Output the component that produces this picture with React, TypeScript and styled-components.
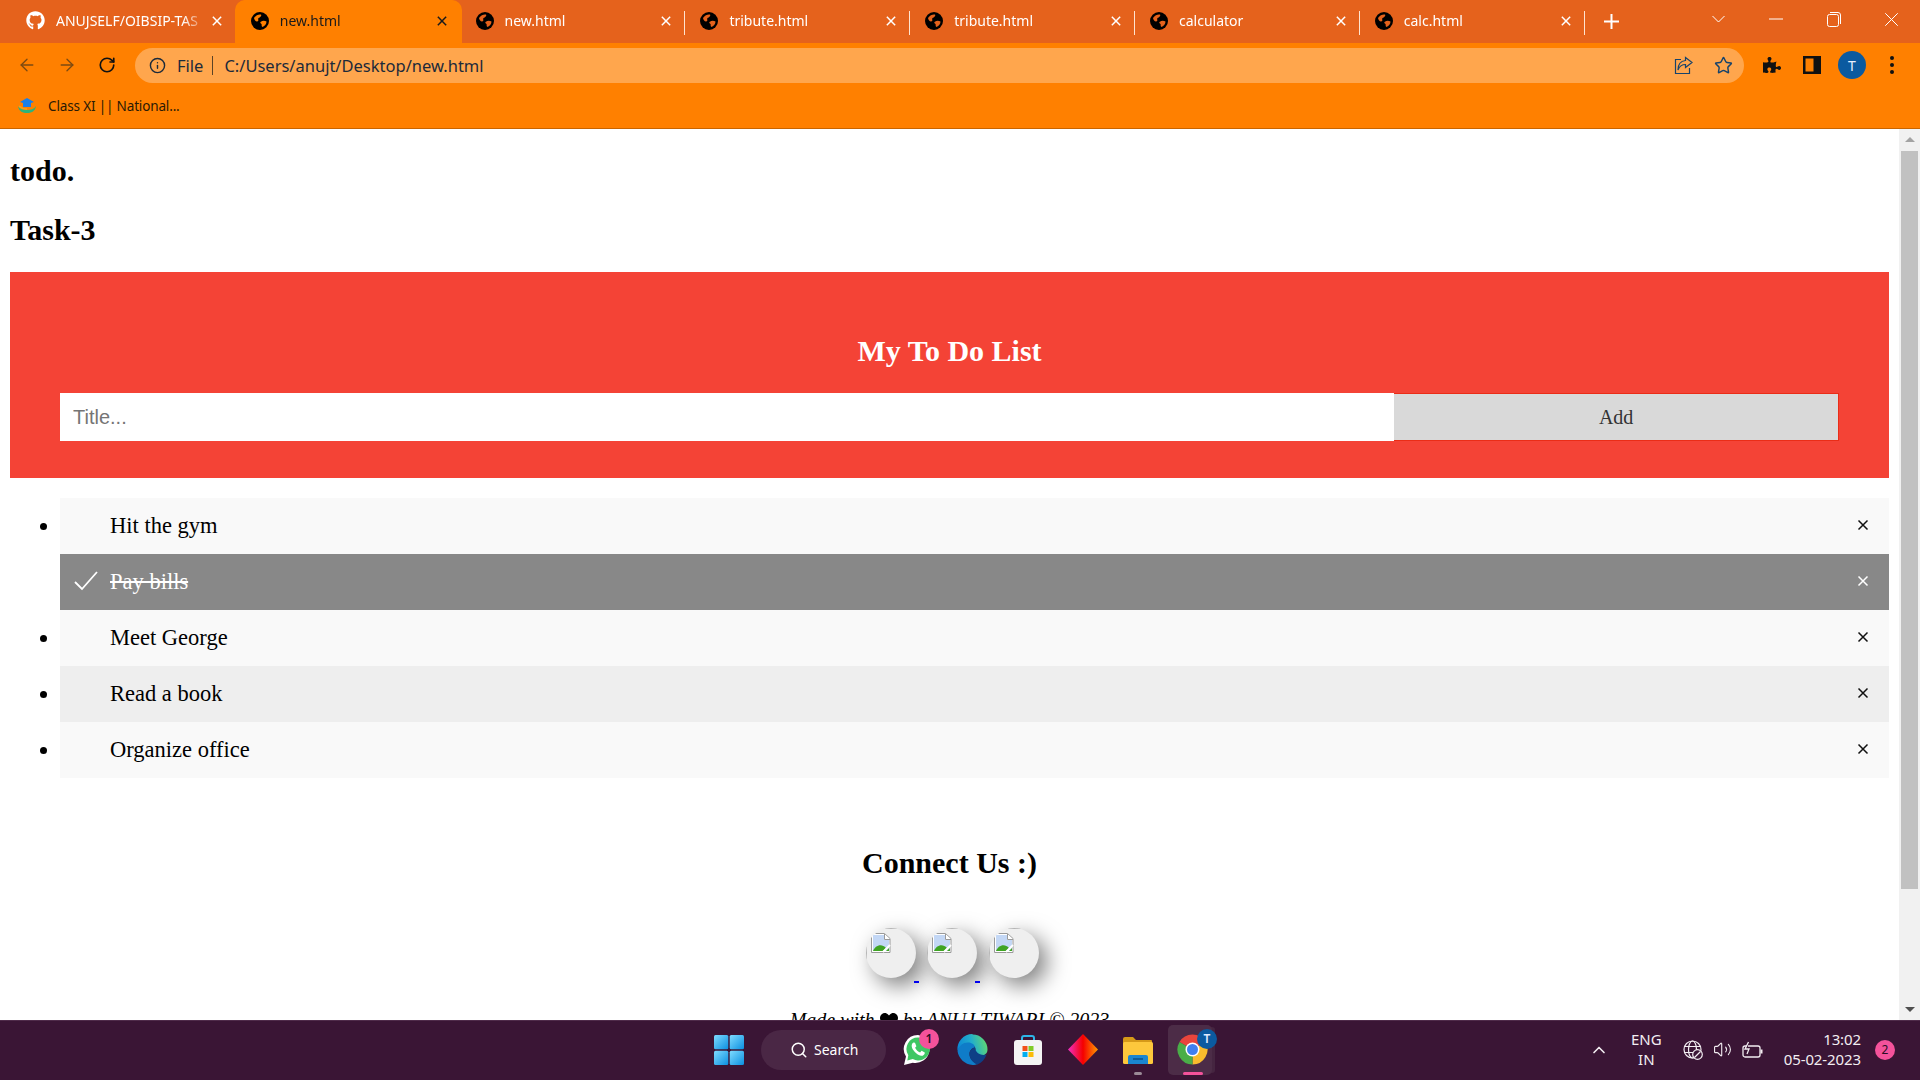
import styled, { createGlobalStyle } from 'styled-components';
import { ArrowLeft, ArrowRight, ChevronUp, Info, RotateCw, Search, Star, Volume2 } from 'lucide-react';
import { FaGithub, FaHeart, FaPuzzlePiece } from 'react-icons/fa';

const tabs = ['ANUJSELF/OIBSIP-TAS', 'new.html', 'new.html', 'tribute.html', 'tribute.html', 'calculator', 'calc.html'];
const todos = [
    { label: 'Hit the gym', checked: false, shade: '#f9f9f9' },
    { label: 'Pay bills', checked: true, shade: '#888888' },
    { label: 'Meet George', checked: false, shade: '#f9f9f9' },
    { label: 'Read a book', checked: false, shade: '#eeeeee' },
    { label: 'Organize office', checked: false, shade: '#f9f9f9' },
];

const GlobalStyle = createGlobalStyle`
    html, body {
        margin: 0;
        height: 100%;
        overflow: hidden;
        background: #fff;
    }
`;

const Screen = styled.div`
    display: flex;
    flex-direction: column;
    width: 1920px;
    height: 1080px;
    overflow: hidden;
    font-family: 'Open Sans', 'Noto Sans', sans-serif;
`;

const TabStrip = styled.div`
    display: flex;
    align-items: stretch;
    height: 43px;
    padding-left: 10px;
    background: #e5621c;
    color: #fff;
`;

const Tab = styled.div<{ $active?: boolean; $separator?: boolean }>`
    position: relative;
    display: flex;
    align-items: center;
    box-sizing: border-box;
    width: 224.8px;
    padding: 0 0 2px 16px;
    border-radius: 10px 10px 0 0;
    background: ${(p) => (p.$active ? '#ff8000' : 'transparent')};
    box-shadow: ${(p) => (p.$active ? '2px 0 0 #ff8000' : 'none')};
    color: ${(p) => (p.$active ? '#1a1a1a' : '#fff')};
    &::after {
        content: '';
        display: ${(p) => (p.$separator ? 'block' : 'none')};
        position: absolute;
        right: -1px;
        top: 11px;
        height: 24px;
        width: 1px;
        background: #ffe3cf;
    }
`;

const TabTitle = styled.span`
    flex: 1;
    margin-left: 11px;
    overflow: hidden;
    white-space: nowrap;
    font-family: 'Noto Sans', sans-serif;
    font-size: 14px;
    mask-image: linear-gradient(to right, #000 84%, transparent 100%);
`;

const TabClose = styled.span`
    display: flex;
    justify-content: center;
    width: 20px;
    margin-right: 8px;
`;

const NewTab = styled.div`
    display: flex;
    align-items: center;
    justify-content: center;
    width: 56px;
`;

const WindowControls = styled.div`
    display: flex;
    margin-left: auto;
`;

const WindowButton = styled.div`
    display: flex;
    align-items: center;
    justify-content: center;
    width: 57.5px;
    height: 38px;
`;

const Toolbar = styled.div`
    display: flex;
    align-items: center;
    height: 44px;
    padding: 0 8px 0 7px;
    background: #ff8000;
`;

const ToolButton = styled.div<{ $dim?: boolean }>`
    display: flex;
    align-items: center;
    justify-content: center;
    flex: none;
    width: 40px;
    color: ${(p) => (p.$dim ? '#7c4a12' : '#111')};
`;

const Omnibox = styled.div`
    display: flex;
    align-items: center;
    flex: 1;
    height: 35px;
    margin: 0 8px;
    padding: 0 1px 0 14px;
    border-radius: 18px;
    background: #ffa64d;
    color: #1c2a3a;
    font-family: 'Noto Sans', sans-serif;
    font-size: 16.5px;
`;

const ChipLabel = styled.span`
    margin-left: 11px;
    padding-right: 9px;
    border-right: 1px solid #5b4326;
    line-height: 19px;
`;

const Url = styled.span`
    flex: 1;
    margin-left: 11px;
    white-space: nowrap;
`;

const OmniIcon = styled.span`
    display: flex;
    justify-content: center;
    width: 40px;
    color: #17436b;
`;

const Avatar = styled.span`
    display: flex;
    align-items: center;
    justify-content: center;
    width: 28px;
    height: 28px;
    border-radius: 50%;
    background: #0b5aa0;
    color: #e8f0ff;
    font-family: 'Noto Sans', sans-serif;
    font-size: 14px;
`;

const Dots = styled.span`
    display: flex;
    flex-direction: column;
    gap: 3px;
    & i {
        width: 4px;
        height: 4px;
        border-radius: 50%;
        background: #111;
    }
`;

const BookmarkBar = styled.div`
    display: flex;
    align-items: center;
    gap: 11px;
    height: 42px;
    padding: 0 0 4px 17px;
    box-sizing: border-box;
    border-bottom: 1px solid #c96500;
    background: #ff8000;
    color: #2a1a05;
    font-family: 'Noto Sans', sans-serif;
    font-size: 13.5px;
    letter-spacing: -0.15px;
`;

const Viewport = styled.div`
    display: flex;
    flex: 1;
    min-height: 0;
    background: #fff;
`;

const Page = styled.main`
    flex: 1;
    min-width: 0;
    height: 100%;
    overflow: hidden;
    font-family: 'Liberation Serif', serif;
    color: #000;
    font-size: 20px;
`;

const PageBody = styled.div`
    margin: 0 10px;
`;

const Heading = styled.h2<{ $center?: boolean; $light?: boolean }>`
    margin: 25px 0;
    font-size: 30px;
    line-height: 34px;
    font-weight: bold;
    text-align: ${(p) => (p.$center ? 'center' : 'left')};
    color: ${(p) => (p.$light ? '#fff' : '#000')};
`;

const TodoHeader = styled.section`
    padding: 37px 50px;
    background: #f44336;
`;

const AddRow = styled.div`
    display: flex;
    height: 48px;
`;

const TitleInput = styled.input`
    box-sizing: border-box;
    width: 75%;
    padding: 13px;
    border: none;
    outline: none;
    background: #fff;
    font-family: 'Liberation Sans', sans-serif;
    font-size: 20px;
    &::placeholder {
        color: #757575;
    }
`;

const AddButton = styled.div`
    display: flex;
    align-items: center;
    justify-content: center;
    box-sizing: border-box;
    width: 25%;
    border: 1px solid #ea2d17;
    border-left: none;
    background: #d9d9d9;
    color: #333;
`;

const TodoList = styled.ul`
    margin: 20px 0 0;
    padding: 0 0 0 50px;
`;

const TodoItem = styled.li<{ $checked: boolean; $shade: string }>`
    position: relative;
    box-sizing: border-box;
    height: 56px;
    padding: 15px 10px 15px 50px;
    font-size: 22.5px;
    line-height: 26px;
    background: ${(p) => p.$shade};
    color: ${(p) => (p.$checked ? '#fff' : '#000')};
    list-style-type: ${(p) => (p.$checked ? 'none' : 'disc')};
    text-decoration: ${(p) => (p.$checked ? 'line-through' : 'none')};
`;

const CheckMark = styled.svg`
    position: absolute;
    left: 14px;
    top: 17px;
`;

const CloseMark = styled.svg<{ $light: boolean }>`
    position: absolute;
    right: 20px;
    top: 21px;
    color: ${(p) => (p.$light ? '#fff' : '#111')};
`;

const ConnectSection = styled.section`
    padding-top: 43px;
    & > h2 {
        margin-bottom: 48px;
    }
`;

const SocialRow = styled.div`
    display: flex;
    justify-content: center;
    gap: 11.5px;
    margin-left: 5px;
`;

const SocialLink = styled.a<{ $tail?: boolean }>`
    position: relative;
    width: 50px;
    height: 50px;
    border-radius: 50%;
    background: #efefef;
    box-shadow: 8px 8px 22px rgba(0, 0, 0, 0.5);
    &::after {
        content: '';
        display: ${(p) => (p.$tail ? 'block' : 'none')};
        position: absolute;
        right: -3px;
        bottom: -5px;
        width: 5px;
        height: 2px;
        background: #0000ee;
    }
`;

const ImageClip = styled.span`
    display: block;
    width: 100%;
    height: 100%;
    border-radius: 50%;
    overflow: hidden;
`;

const BrokenImage = styled.svg`
    display: block;
`;

const Credit = styled.p`
    display: flex;
    justify-content: center;
    align-items: center;
    gap: 5px;
    margin: 31px 0 0;
    font-style: italic;
    font-size: 20px;
    line-height: 23px;
`;

const Scrollbar = styled.div`
    display: flex;
    flex-direction: column;
    align-items: center;
    flex: none;
    width: 21px;
    background: #f1f1f1;
`;

const ScrollArrow = styled.div<{ $down?: boolean }>`
    flex: none;
    width: 0;
    height: 0;
    margin: 8px 0;
    border-left: 5px solid transparent;
    border-right: 5px solid transparent;
    ${(p) => (p.$down ? 'border-top: 5px solid #505050;' : 'border-bottom: 5px solid #a3a3a3;')}
`;

const ScrollThumb = styled.div`
    width: 17px;
    height: 738px;
    margin-top: 1px;
    margin-bottom: auto;
    background: #c1c1c1;
`;

const Taskbar = styled.footer`
    display: flex;
    align-items: center;
    box-sizing: border-box;
    height: 60px;
    padding: 0 0 2px 714px;
    border-top: 1px solid #4f2b4a;
    background: #3a1535;
    color: #fff;
    font-family: 'Noto Sans', sans-serif;
`;

const StartSlot = styled.div`
    display: flex;
    justify-content: center;
    width: 30px;
    margin-right: 17px;
`;

const SearchPill = styled.div`
    display: flex;
    align-items: center;
    gap: 6px;
    box-sizing: border-box;
    width: 125px;
    height: 40px;
    margin-right: 4px;
    padding-left: 29px;
    border-radius: 20px;
    background: #4a2745;
    font-size: 14px;
`;

const AppSlot = styled.div<{ $active?: boolean }>`
    position: relative;
    isolation: isolate;
    display: flex;
    align-items: center;
    justify-content: center;
    width: 55px;
    height: 50px;
    &::before {
        content: '';
        display: ${(p) => (p.$active ? 'block' : 'none')};
        position: absolute;
        z-index: -1;
        inset: 0 8px 0 3px;
        border-radius: 5px;
        background: #4c2c47;
        box-shadow: 5px 0 0 -2px #452540;
    }
`;

const AppBadge = styled.span<{ $blue?: boolean }>`
    position: absolute;
    top: 4px;
    right: ${(p) => (p.$blue ? '3px' : '6px')};
    display: flex;
    align-items: center;
    justify-content: center;
    width: 20px;
    height: 20px;
    border-radius: 50%;
    background: ${(p) => (p.$blue ? '#0b5aa0' : '#f4529b')};
    color: ${(p) => (p.$blue ? '#dfeaff' : '#2a0d24')};
    font-size: 12px;
    font-weight: 600;
`;

const RunDot = styled.span<{ $active?: boolean }>`
    position: absolute;
    bottom: 0;
    left: 50%;
    transform: translateX(-50%);
    width: ${(p) => (p.$active ? '20px' : '8px')};
    height: 3px;
    border-radius: 2px;
    background: ${(p) => (p.$active ? '#f4529b' : '#9a8a97')};
`;

const Tray = styled.div`
    display: flex;
    align-items: center;
    margin-left: auto;
    height: 100%;
    font-size: 15px;
`;

const TrayText = styled.div<{ $right?: boolean }>`
    display: flex;
    flex-direction: column;
    align-items: ${(p) => (p.$right ? 'flex-end' : 'center')};
    gap: 1px;
    margin: ${(p) => (p.$right ? '0 0 0 16px' : '0 16px 0 17px')};
    line-height: 19px;
    letter-spacing: ${(p) => (p.$right ? '-0.1px' : '0')};
    color: #f2edf1;
`;

const TrayIcon = styled.span`
    display: flex;
    justify-content: center;
    width: 30px;
    color: #f2edf1;
`;

const NotifyBadge = styled.span`
    display: flex;
    align-items: center;
    justify-content: center;
    width: 20px;
    height: 20px;
    margin: 0 25px 0 14px;
    border-radius: 50%;
    background: #f4529b;
    color: #2a0d24;
    font-size: 12px;
`;

const GlobeIcon = ({ land }: { land: string }) => (
    <svg width="18" height="18" viewBox="0 0 18 18">
        <circle cx="9" cy="9" r="9" fill="#000" />
        <path d="M3 6c2-3 5-4 7-3.500 1 1-1 3-2.500 3.500-1 1.500 1 3-1.500 3.500C4.500 9.500 3.500 8 3 6Z" fill={land} />
        <path d="M9.500 10c2-1.500 4-1.500 6-.5 0 2.500-1.500 4.500-4 5.500-1.500-1-.5-2.500-1-3-1-.5-1.500-1.200-1-2Z" fill={land} />
    </svg>
);

const BrokenImageIcon = () => (
    <BrokenImage width="50" height="50" viewBox="0 0 50 50">
        <path d="M.5 50V.5H50" fill="none" stroke="#b5b5b5" />
        <g transform="translate(5 5)">
            <path d="M.5.500h13l5.500 5v14H.5Z" fill="#fff" stroke="#9a9a9a" />
            <path d="M2 2h11v5h5v11H2Z" fill="#c3d7f5" />
            <path d="M2 18c2-6 9-8 13-3l-3 3Z" fill="#3fa423" />
            <path d="M15 18l3-3v3Z" fill="#3fa423" />
            <path d="M12 19 19 12" stroke="#fff" strokeWidth="2" />
            <path d="M13.500 1v5.500H19" fill="#fff" stroke="#9a9a9a" />
        </g>
    </BrokenImage>
);

const StartIcon = () => (
    <svg width="30" height="30" viewBox="0 0 30 30">
        <defs>
            <linearGradient id="winTile" x1="0" y1="0" x2="1" y2="1">
                <stop offset="0" stopColor="#7fdcff" />
                <stop offset="1" stopColor="#0b8fe0" />
            </linearGradient>
        </defs>
        <rect x="0" y="0" width="14.300" height="14.300" rx="1.500" fill="url(#winTile)" />
        <rect x="15.700" y="0" width="14.300" height="14.300" rx="1.500" fill="url(#winTile)" />
        <rect x="0" y="15.700" width="14.300" height="14.300" rx="1.500" fill="url(#winTile)" />
        <rect x="15.700" y="15.700" width="14.300" height="14.300" rx="1.500" fill="url(#winTile)" />
    </svg>
);

const WhatsappIcon = () => (
    <svg width="30" height="32" viewBox="0 0 30 32">
        <path d="M15 1a14 14 0 0 0-12 21.500L1 31l8.800-2.300A14 14 0 1 0 15 1Z" fill="#fff" />
        <path d="M15 3.500a11.500 11.500 0 0 0-9.700 17.700l-1 5.300 5.500-1.400A11.500 11.500 0 1 0 15 3.500Z" fill="#3ec764" />
        <path d="M10.500 8.500c-1 .3-2 2-1.800 3.800.4 3.600 5 8.700 9.300 9.400 1.800.3 3.500-1 3.700-2.300l.1-1-3.200-1.600-1.500 1.700c-2-.7-4-2.700-5-4.800l1.300-1.500-1.400-3.500Z" fill="#fff" />
    </svg>
);

const EdgeIcon = () => (
    <svg width="31" height="31" viewBox="0 0 31 31">
        <defs>
            <linearGradient id="edgeBand" x1="0" y1="0.6" x2="1" y2="0.4">
                <stop offset="0" stopColor="#0b86d6" />
                <stop offset="0.5" stopColor="#22aecb" />
                <stop offset="1" stopColor="#62d86f" />
            </linearGradient>
        </defs>
        <path d="M15.500.5a15 15 0 0 1 15 15c0 4-3 6-6.500 6-4 0-6.500-1.500-6.500-3.500 0-1 1-1.500 1-3 0-3-3.500-5.500-7.500-5.500-5 0-8.500 4-10.500 7a15 15 0 0 1 15-16.500Z" fill="url(#edgeBand)" />
        <path d="M.5 17C2 11.500 6 8.500 11 8.500c4 0 7 2.500 7 5-3 .5-5.500 3-5.500 6.500 0 4 3 8 8.500 10-1.500.5-3.500 1-5.500 1C8 30.500 1.500 24.500.5 17Z" fill="#0f7cc8" />
        <path d="M12.500 20c0-3.500 2.500-6 5.500-6.500 0 3 3 7.500 9 7.500 1 0 2-.2 2.500-.5-1.500 4.500-4.500 8-9 10-5.500-2-8-6.500-8-10.500Z" fill="#0e3f86" />
    </svg>
);

const StoreIcon = () => (
    <svg width="30" height="31" viewBox="0 0 30 31">
        <path d="M9 7V4a2 2 0 0 1 2-2h8a2 2 0 0 1 2 2v3" fill="none" stroke="#2db5e8" strokeWidth="2" />
        <rect x="1" y="6" width="28" height="25" rx="3" fill="#f4f4f4" />
        <rect x="9.500" y="12" width="5" height="5" fill="#f1511b" />
        <rect x="15.500" y="12" width="5" height="5" fill="#80cc28" />
        <rect x="9.500" y="18" width="5" height="5" fill="#00adef" />
        <rect x="15.500" y="18" width="5" height="5" fill="#fbbc09" />
    </svg>
);

const DiamondIcon = () => (
    <svg width="30" height="31" viewBox="0 0 30 31">
        <defs>
            <linearGradient id="diamondFill" x1="0" y1="0" x2="1" y2="0">
                <stop offset="0" stopColor="#f02fc2" />
                <stop offset="0.5" stopColor="#f50000" />
                <stop offset="1" stopColor="#ff9a00" />
            </linearGradient>
        </defs>
        <path d="M15 0 30 15.500 15 31 0 15.500Z" fill="url(#diamondFill)" />
    </svg>
);

const FolderIcon = () => (
    <svg width="31" height="28" viewBox="0 0 31 28">
        <path d="M1 3a2 2 0 0 1 2-2h8l3 3h15a1 1 0 0 1 1 1v4H1Z" fill="#d69a18" />
        <rect x="1" y="6" width="30" height="22" rx="1.500" fill="#fdc83c" />
        <path d="M6 28v-7a2 2 0 0 1 2-2h16a2 2 0 0 1 2 2v7Z" fill="#1a86d0" />
        <path d="M11 23h10" stroke="#0b4f88" strokeWidth="1.500" />
    </svg>
);

const ChromeIcon = () => (
    <svg width="31" height="31" viewBox="0 0 31 31">
        <path d="M15.500 15.500 2.500 8A15 15 0 0 1 28.500 8Z" fill="#e8453c" />
        <path d="M15.500 15.500 28.500 8A15 15 0 0 1 15.500 30.500Z" fill="#f9bb2d" />
        <path d="M15.500 15.500 15.500 30.500A15 15 0 0 1 2.500 8Z" fill="#4aae48" />
        <circle cx="15.500" cy="15.500" r="7" fill="#fff" />
        <circle cx="15.500" cy="15.500" r="5.500" fill="#3f7ff0" />
    </svg>
);

const BookmarkIcon = () => (
    <svg width="20" height="16" viewBox="0 0 20 16">
        <path d="M1 8c1 6 5 7 9 7s8-1 9-7c-2 3-5 4-9 4S3 11 1 8Z" fill="#2eb27a" />
        <path d="M2 8c2 2 4 3 8 3" fill="none" stroke="#f0a020" strokeWidth="1.500" />
        <path d="M10 0 17 4l-3 1v4H6V5L3 4Z" fill="#1a7fe8" />
    </svg>
);

const ShareIcon = () => (
    <svg width="19" height="19" viewBox="0 0 19 19" fill="none" stroke="currentColor" strokeWidth="1.200">
        <path d="M7 3.500H1.500v14h14V12" />
        <path d="M11.500 1.500 18 6.500l-6.500 5V8.500C8 8.500 5.500 10 4 14c0-5.500 2.500-9 7.500-9.500Z" />
    </svg>
);

const SidePanelIcon = () => (
    <svg width="18" height="18" viewBox="0 0 18 18">
        <path d="M0 0h18v18H0Z" fill="#111" />
        <path d="M2.500 2.500h8v13h-8Z" fill="#ff8000" />
    </svg>
);

const RestoreIcon = () => (
    <svg width="14" height="15" viewBox="0 0 14 15" fill="none" stroke="#fff">
        <rect x=".5" y="2.500" width="11" height="12" rx="2" />
        <path d="M3 .5h8a2.500 2.500 0 0 1 2.500 2.500v9" />
    </svg>
);

const CrossIcon = ({ size, weight }: { size: number; weight: number }) => (
    <svg width={size} height={size} viewBox="0 0 12 12" stroke="currentColor" strokeWidth={weight}>
        <path d="M1 1 11 11M11 1 1 11" />
    </svg>
);

const GlobeOffIcon = () => (
    <svg width="20" height="20" viewBox="0 0 20 20" fill="none" stroke="currentColor" strokeWidth="1.200">
        <circle cx="9.500" cy="9.500" r="8.500" />
        <ellipse cx="9.500" cy="9.500" rx="4" ry="8.500" />
        <path d="M1.500 6.500h16M1.500 12.500h16" />
        <circle cx="14.500" cy="14.500" r="4.800" fill="#3a1535" />
        <path d="M11.500 17.500l6-6" />
    </svg>
);

const BatteryIcon = () => (
    <svg width="21" height="18" viewBox="0 0 21 18" fill="none" stroke="currentColor" strokeWidth="1.300">
        <rect x="1" y="5" width="17" height="11" rx="2" />
        <path d="M19.500 8.500v4" strokeWidth="2" />
        <path d="M6.500 1 3 8h4l-2 5" fill="#3a1535" />
    </svg>
);

const SocialBubble = ({ tail }: { tail?: boolean }) => (
    <SocialLink $tail={tail}>
        <ImageClip>
            <BrokenImageIcon />
        </ImageClip>
    </SocialLink>
);

const App = () => (
    <Screen>
        <GlobalStyle />
        <TabStrip>
            {tabs.map((title, i) => (
                <Tab key={i} $active={i === 1} $separator={i >= 2}>
                    {i === 0 ? <FaGithub size={19} color="#fff" /> : <GlobeIcon land={i === 1 ? '#ff8000' : '#e5621c'} />}
                    <TabTitle>{title}</TabTitle>
                    <TabClose>
                        <CrossIcon size={10} weight={1.800} />
                    </TabClose>
                </Tab>
            ))}
            <NewTab>
                <svg width="15" height="15" viewBox="0 0 15 15" stroke="#fff" strokeWidth="2">
                    <path d="M7.500 0v15M0 7.500h15" />
                </svg>
            </NewTab>
            <WindowControls>
                <WindowButton>
                    <svg width="13" height="8" viewBox="0 0 13 8" fill="none" stroke="#fff">
                        <path d="M.5 1 6.500 7l6-6" />
                    </svg>
                </WindowButton>
                <WindowButton>
                    <svg width="14" height="2" viewBox="0 0 14 2">
                        <path d="M0 1h14" stroke="#fff" />
                    </svg>
                </WindowButton>
                <WindowButton>
                    <RestoreIcon />
                </WindowButton>
                <WindowButton>
                    <CrossIcon size={15} weight={0.800} />
                </WindowButton>
            </WindowControls>
        </TabStrip>
        <Toolbar>
            <ToolButton $dim>
                <ArrowLeft size={20} strokeWidth={1.600} />
            </ToolButton>
            <ToolButton $dim>
                <ArrowRight size={20} strokeWidth={1.600} />
            </ToolButton>
            <ToolButton>
                <RotateCw size={18} strokeWidth={2.200} />
            </ToolButton>
            <Omnibox>
                <Info size={17} strokeWidth={2} />
                <ChipLabel>File</ChipLabel>
                <Url>C:/Users/anujt/Desktop/new.html</Url>
                <OmniIcon>
                    <ShareIcon />
                </OmniIcon>
                <OmniIcon>
                    <Star size={19} strokeWidth={1.800} />
                </OmniIcon>
            </Omnibox>
            <ToolButton>
                <FaPuzzlePiece size={18} />
            </ToolButton>
            <ToolButton>
                <SidePanelIcon />
            </ToolButton>
            <ToolButton>
                <Avatar>T</Avatar>
            </ToolButton>
            <ToolButton>
                <Dots>
                    <i />
                    <i />
                    <i />
                </Dots>
            </ToolButton>
        </Toolbar>
        <BookmarkBar>
            <BookmarkIcon />
            <span>Class XI || National...</span>
        </BookmarkBar>
        <Viewport>
            <Page>
                <PageBody>
                    <Heading>todo.</Heading>
                    <Heading>Task-3</Heading>
                    <TodoHeader>
                        <Heading $center $light>
                            My To Do List
                        </Heading>
                        <AddRow>
                            <TitleInput placeholder="Title..." readOnly />
                            <AddButton>Add</AddButton>
                        </AddRow>
                    </TodoHeader>
                    <TodoList>
                        {todos.map((todo) => (
                            <TodoItem key={todo.label} $checked={todo.checked} $shade={todo.shade}>
                                {todo.checked && (
                                    <CheckMark width="24" height="20" viewBox="0 0 24 20" fill="none" stroke="#fff" strokeWidth="1.800">
                                        <path d="M1 11l7 7L23 1" />
                                    </CheckMark>
                                )}
                                {todo.label}
                                <CloseMark $light={todo.checked} width="12" height="12" viewBox="0 0 12 12" stroke="currentColor" strokeWidth="1.500">
                                    <path d="M1.500 1.500l9 9M10.500 1.500l-9 9" />
                                </CloseMark>
                            </TodoItem>
                        ))}
                    </TodoList>
                    <ConnectSection>
                        <Heading $center>Connect Us :)</Heading>
                        <SocialRow>
                            <SocialBubble tail />
                            <SocialBubble tail />
                            <SocialBubble />
                        </SocialRow>
                        <Credit>
                            Made with <FaHeart size={18} /> by ANUJ TIWARI © 2023
                        </Credit>
                    </ConnectSection>
                </PageBody>
            </Page>
            <Scrollbar>
                <ScrollArrow />
                <ScrollThumb />
                <ScrollArrow $down />
            </Scrollbar>
        </Viewport>
        <Taskbar>
            <StartSlot>
                <StartIcon />
            </StartSlot>
            <SearchPill>
                <Search size={18} strokeWidth={2} />
                Search
            </SearchPill>
            <AppSlot>
                <WhatsappIcon />
                <AppBadge>1</AppBadge>
            </AppSlot>
            <AppSlot>
                <EdgeIcon />
            </AppSlot>
            <AppSlot>
                <StoreIcon />
            </AppSlot>
            <AppSlot>
                <DiamondIcon />
            </AppSlot>
            <AppSlot>
                <FolderIcon />
                <RunDot />
            </AppSlot>
            <AppSlot $active>
                <ChromeIcon />
                <AppBadge $blue>T</AppBadge>
                <RunDot $active />
            </AppSlot>
            <Tray>
                <TrayIcon>
                    <ChevronUp size={20} />
                </TrayIcon>
                <TrayText>
                    <span>ENG</span>
                    <span>IN</span>
                </TrayText>
                <TrayIcon>
                    <GlobeOffIcon />
                </TrayIcon>
                <TrayIcon>
                    <Volume2 size={19} strokeWidth={1.400} />
                </TrayIcon>
                <TrayIcon>
                    <BatteryIcon />
                </TrayIcon>
                <TrayText $right>
                    <span>13:02</span>
                    <span>05-02-2023</span>
                </TrayText>
                <NotifyBadge>2</NotifyBadge>
            </Tray>
        </Taskbar>
    </Screen>
);

export default App;
